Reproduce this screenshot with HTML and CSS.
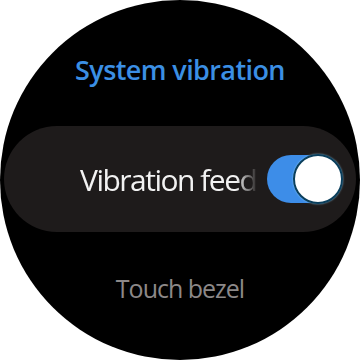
FILE: index.html
```html
<!DOCTYPE html>
<html lang="en">
<head>
  <meta charset="UTF-8" />
  <meta name="viewport" content="width=device-width, initial-scale=1.0" />
  <title>System vibration</title>
  <link rel="stylesheet" href="styles.css">
</head>
<body>
  <div class="watch">
    <h1 class="title">System vibration</h1>

    <div class="row">
      <span class="row-label">Vibration feedback</span>
      <span class="toggle">
        <span class="toggle-thumb"></span>
      </span>
    </div>

    <div class="next-item">Touch bezel</div>
  </div>
</body>
</html>
```

FILE: styles.css
```css
body {
  margin: 0;
  background: #ffffff;
  font-family: "Open Sans", "Noto Sans", sans-serif;
}
.watch {
  width: 360px;
  height: 360px;
  border-radius: 50%;
  background: #000;
  overflow: hidden;
  display: flex;
  flex-direction: column;
  align-items: center;
}
.title {
  margin: 52px 0 0;
  font-size: 27px;
  font-weight: 600;
  line-height: 36px;
  color: #3b8fe4;
  letter-spacing: -0.6px;
}
.row {
  box-sizing: border-box;
  width: 352px;
  height: 106px;
  margin-top: 38px;
  border-radius: 53px;
  background: #1e1b1b;
  display: flex;
  align-items: center;
  padding: 0 0 0 76px;
}
.row-label {
  flex: none;
  width: 178px;
  overflow: hidden;
  white-space: nowrap;
  font-size: 30px;
  color: #f2f2f2;
  letter-spacing: -1.5px;
  -webkit-mask-image: linear-gradient(to right, #000 88%, transparent 100%);
  mask-image: linear-gradient(to right, #000 88%, transparent 100%);
}
.toggle {
  flex: none;
  position: relative;
  margin-left: 9px;
  width: 64px;
  height: 48px;
  border-radius: 24px;
  background: #3d8de8;
}
.toggle-thumb {
  position: absolute;
  top: -1px;
  left: 26px;
  width: 46px;
  height: 46px;
  border-radius: 50%;
  background: #fff;
  border: 2px solid #0b3f5c;
  box-shadow: 0 0 2px rgba(160, 220, 255, 0.8);
}
.next-item {
  margin-top: 39px;
  font-size: 25px;
  color: #8c8888;
  letter-spacing: -1px;
}
```
